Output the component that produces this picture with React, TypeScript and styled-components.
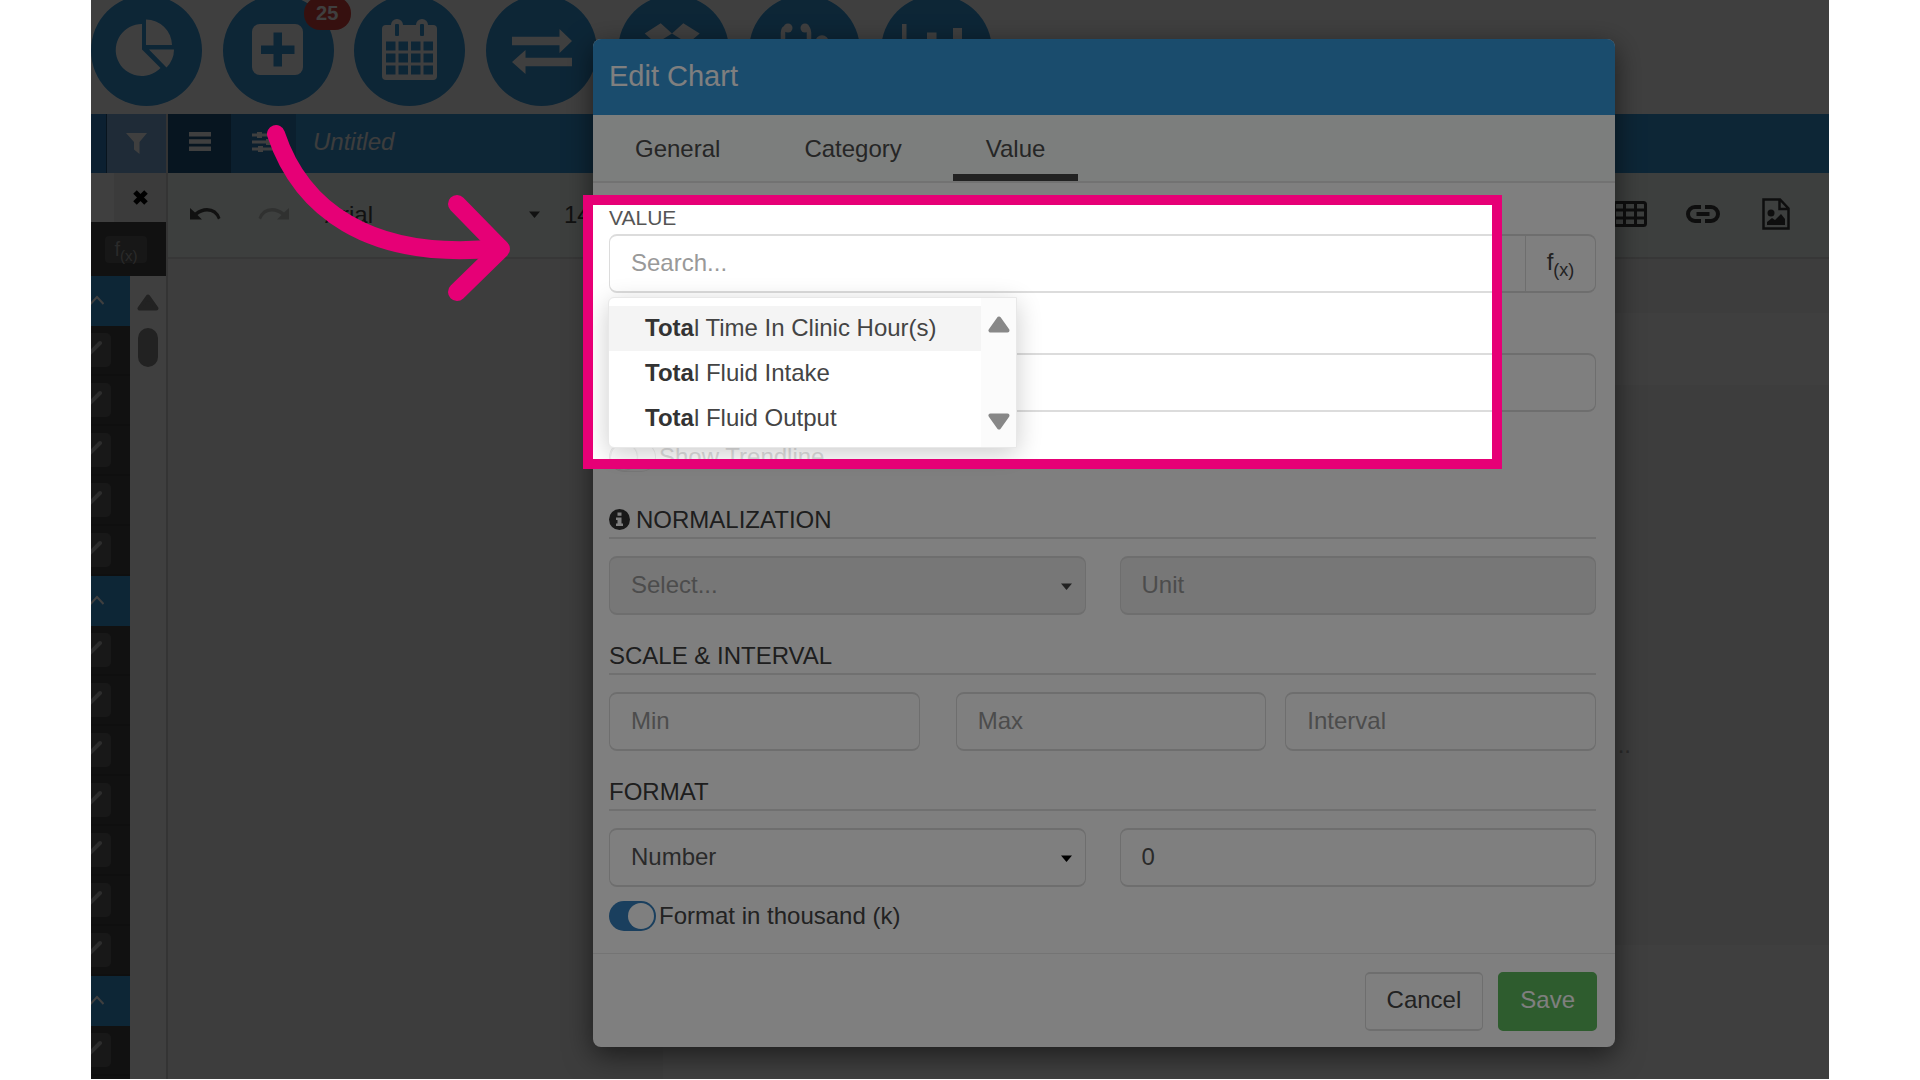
import React from "react";
import styled, { createGlobalStyle, css } from "styled-components";

const pink = "#e60076";
const blue = "#3498db";
const sans = `"Liberation Sans", Arial, sans-serif`;

const GlobalStyle = createGlobalStyle`
  *, *::before, *::after { box-sizing: border-box; }
  body { margin: 0; background: #fff; font-family: ${sans}; font-size: 24px; color: #444; overflow: hidden; }
  button, input, select { font: inherit; color: inherit; margin: 0; }
  ul { list-style: none; margin: 0; padding: 0; }
`;

const Stage = styled.div`
  position: relative;
  height: calc(100vh - 1px);
  margin: 0 91px;
  overflow: hidden;
`;

/* ---------- application behind the dialog ---------- */

const AppShell = styled.div`
  display: flex;
  flex-direction: column;
  height: 100%;
  background: #fff;
`;

const ModuleBar = styled.nav`
  display: flex;
  justify-content: space-between;
  flex: none;
  width: 901px;
  height: 114px;
`;

const ModuleButton = styled.button`
  position: relative;
  width: 111px;
  height: 111px;
  margin-top: -5px;
  padding: 0;
  border: 0;
  border-radius: 50%;
  background: ${blue};
  color: #fff;
  svg { display: block; width: 110px; height: 110px; }
`;

const Badge = styled.span`
  position: absolute;
  top: 2px;
  right: -17px;
  width: 47px;
  height: 33px;
  border-radius: 16px;
  background: #d9433e;
  font-size: 20px;
  font-weight: 700;
  line-height: 33px;
  text-align: center;
`;

const Workspace = styled.div`
  display: flex;
  flex: 1;
  min-height: 0;
`;

const Sidebar = styled.aside`
  display: flex;
  flex-direction: column;
  flex: none;
  width: 77px;
  border-right: 2px solid #d0d0d0;
`;

const SideHeader = styled.div`
  display: flex;
  height: 59px;
  flex: none;
  background: #3080c4;
`;

const FilterButton = styled.button`
  display: grid;
  place-items: center;
  width: 60px;
  margin-left: auto;
  padding: 0;
  border: 0;
  border-left: 1px solid #205078;
  background: #7cacdc;
  color: #fff;
`;

const CloseRow = styled.div`
  display: flex;
  justify-content: flex-end;
  flex: none;
  height: 49px;
`;

const CloseButton = styled.button`
  display: grid;
  place-items: center;
  width: 52px;
  padding: 0;
  border: 0;
  background: #ececec;
  color: #000;
`;

const FormulaRow = styled.div`
  display: flex;
  align-items: center;
  justify-content: flex-end;
  flex: none;
  height: 54px;
  padding-right: 19px;
  background: #444;
`;

const FormulaChip = styled.button`
  width: 42px;
  height: 27px;
  padding: 0;
  border: 0;
  border-radius: 4px;
  background: #5c5c5c;
  color: #a8a8a8;
  font-size: 20px;
  line-height: 20px;
  sub { font-size: 15px; line-height: 0; }
`;

const SideBody = styled.div`
  display: flex;
  flex: 1;
  min-height: 0;
`;

const List = styled.div`
  width: 39px;
  overflow: hidden;
  background: #444;
`;

const GroupHeader = styled.button`
  display: flex;
  align-items: center;
  justify-content: flex-end;
  width: 100%;
  height: 50px;
  padding: 0 26px 2px 0;
  border: 0;
  background: ${blue};
  color: #fff;
  svg { flex: none; }
`;

const ListRow = styled.div`
  display: flex;
  align-items: center;
  justify-content: flex-end;
  height: 50px;
  padding-right: 19px;
  border-bottom: 2px solid #3c3c3c;
`;

const CheckButton = styled.button`
  display: grid;
  place-items: center;
  flex: none;
  width: 40px;
  height: 34px;
  padding: 0;
  border: 0;
  border-radius: 5px;
  background: #606060;
  color: #b4b4b4;
`;

const ScrollTrack = styled.div`
  display: flex;
  flex-direction: column;
  align-items: center;
  gap: 17px;
  flex: 1;
  padding-top: 18px;
  color: #888;
`;

const ScrollThumb = styled.div`
  width: 20px;
  height: 39px;
  border-radius: 10px;
  background: #888;
`;

const Editor = styled.main`
  display: flex;
  flex-direction: column;
  flex: 1;
  min-width: 0;
  background: #f4f4f4;
`;

const TitleBar = styled.header`
  display: flex;
  align-items: center;
  flex: none;
  height: 59px;
  background: ${blue};
  color: #fff;
`;

const PaneButton = styled.button<{ $active?: boolean }>`
  display: grid;
  place-items: center;
  width: ${(p) => (p.$active ? 63 : 65)}px;
  height: 59px;
  padding: 0 0 4px;
  border: 0;
  background: ${(p) => (p.$active ? "#1c5480" : "#2f7cb8")};
  color: #fff;
`;

const DocName = styled.em`
  padding: 0 0 4px 17px;
  color: #f4f4f4;
`;

const Toolbar = styled.div`
  display: flex;
  align-items: center;
  flex: none;
  height: 86px;
  padding: 0 17px 2px 22px;
  border-bottom: 2px solid #dcdcdc;
  background: #f4fcf8;
  color: #444;
`;

const ToolButton = styled.button<{ $muted?: boolean }>`
  display: grid;
  place-items: center;
  width: 72px;
  height: 48px;
  padding: 0;
  border: 0;
  background: none;
  color: ${(p) => (p.$muted ? "#c0c4c2" : "#444")};
`;

const HistoryTools = styled.div`
  display: flex;
  width: 135px;
  ${ToolButton} { justify-content: start; }
`;

const InsertTools = styled.div`
  display: flex;
  gap: 1px;
  margin-left: auto;
  ${ToolButton} { color: #383838; }
`;

const ToolSelect = styled.div<{ $wide?: boolean }>`
  display: flex;
  align-items: center;
  width: ${(p) => (p.$wide ? 239 : 90)}px;
  select {
    flex: 1;
    min-width: 0;
    padding: 0;
    border: 0;
    background: none;
    appearance: none;
  }
  svg { margin-right: 24px; }
`;

const Canvas = styled.div`
  display: flex;
  flex-direction: column;
  flex: 1;
  min-height: 0;
  padding: 54px 0 0 495px;
`;

const Sheet = styled.div<{ $fill?: boolean }>`
  background: #fcfcfc;
  ${(p) => (p.$fill ? css`flex: 1;` : css`flex: none; height: 72px;`)}
`;

const SheetText = styled.p`
  flex: none;
  height: 560px;
  margin: 0;
  padding: 346px 198px 0 0;
  text-align: right;
  line-height: 28px;
  color: #aaa;
`;

/* ---------- dialog ---------- */

const Backdrop = styled.div`
  position: absolute;
  inset: 0;
  display: flex;
  align-items: flex-start;
  justify-content: flex-end;
  padding: 39px 214px 0 0;
  background: rgba(0, 0, 0, 0.5);
`;

const Dialog = styled.section`
  position: relative;
  width: 1022px;
  border-radius: 8px;
  background: #fff;
  box-shadow: 0 8px 28px rgba(0, 0, 0, 0.55);
`;

const DialogTitle = styled.h1`
  margin: 0;
  padding: 0 16px 2px;
  border-radius: 8px 8px 0 0;
  background: ${blue};
  color: #fff;
  font-size: 29px;
  font-weight: 400;
  line-height: 74px;
`;

const Tabs = styled.div`
  display: flex;
  gap: 18px;
  padding: 0 9px;
  height: 68px;
  border-bottom: 2px solid #e4e4e4;
  background: #f8fcfa;
`;

const Tab = styled.button<{ $active?: boolean }>`
  padding: 2px 33px 0;
  border: 0;
  border-top: 7px solid transparent;
  border-bottom: 7px solid ${(p) => (p.$active ? "#444" : "transparent")};
  background: none;
  color: #4c4c4c;
`;

const Body = styled.form`
  padding: 21px 19px 21px 16px;
`;

const FieldLabel = styled.label`
  display: block;
  padding-bottom: 2px;
  font-size: 21px;
  line-height: 28px;
  color: #555;
`;

const control = css`
  width: 100%;
  height: 59px;
  padding: 0 21px 2px;
  border: solid #dcdcdc;
  border-width: 2px 1px;
  border-radius: 8px;
  background: #fff;
  color: #555;
  outline: 0;
`;

const TextInput = styled.input`
  ${control}
  &::placeholder { color: #999; opacity: 1; }
  &:disabled { background: #eee; }
`;

const SearchGroup = styled.div`
  position: relative;
  display: flex;
  margin-bottom: 60px;
  ${TextInput} { border-radius: 8px 0 0 8px; }
`;

const FormulaButton = styled.button`
  flex: none;
  width: 70px;
  padding: 0 0 3px;
  border: solid #dcdcdc;
  border-width: 2px 1px 2px 0;
  border-radius: 0 8px 8px 0;
  background: #fff;
  color: #444;
  line-height: 24px;
  sub { font-size: 18px; line-height: 0; }
`;

const Menu = styled.div`
  position: absolute;
  z-index: 1;
  top: 63px;
  left: -1px;
  display: flex;
  width: 409px;
  height: 151px;
  border: 1px solid #e8e8e8;
  border-radius: 6px 0 0 6px;
  background: #fff;
  box-shadow: 0 6px 26px rgba(0, 0, 0, 0.2);
`;

const Options = styled.ul`
  flex: 1;
  padding-top: 8px;
`;

const Option = styled.li<{ $active?: boolean }>`
  padding: 0 0 2px 36px;
  background: ${(p) => (p.$active ? "#f4f4f4" : "none")};
  line-height: 43px;
  white-space: nowrap;
  b { color: #333; }
`;

const MenuScroll = styled.div`
  display: flex;
  flex-direction: column;
  align-items: center;
  justify-content: space-between;
  width: 35px;
  padding: 18px 0 17px;
  background: #fbfbfb;
  color: #888;
`;

const SwitchRow = styled.label<{ $faint?: boolean }>`
  display: flex;
  align-items: center;
  gap: 3px;
  height: 32px;
  color: ${(p) => (p.$faint ? "#ddd" : "#444")};
`;

const TrendRow = styled.div`
  padding: 29px 0 31px;
`;

const ThousandRow = styled.div`
  padding-top: 13px;
`;

const Switch = styled.input`
  appearance: none;
  width: 47px;
  height: 30px;
  margin: 0;
  padding: 2px;
  border-radius: 15px;
  background: #fff;
  box-shadow: inset 0 0 0 1px #eee;
  &::before {
    content: "";
    display: block;
    width: 26px;
    height: 26px;
    border-radius: 50%;
    background: #fff;
    box-shadow: 0 0 2px #ccc;
  }
  &:checked { background: #347ebc; box-shadow: none; }
  &:checked::before { margin-left: auto; box-shadow: none; }
`;

const Fieldset = styled.section`
  & + & { padding-top: 25px; }
`;

const Legend = styled.h2`
  display: flex;
  align-items: center;
  gap: 6px;
  margin: 0 0 17px;
  padding-bottom: 2px;
  border-bottom: 2px solid #e0e0e0;
  color: #3c3c3c;
  font-size: 24px;
  font-weight: 400;
  line-height: 31px;
`;

const TwoColumns = styled.div`
  display: grid;
  grid-template-columns: 1fr 1fr;
  gap: 34px;
`;

const RangeColumns = styled.div`
  display: grid;
  grid-template-columns: 1fr 36px 1fr 19px 1fr;
  & > :nth-child(2) { grid-column: 3; }
  & > :nth-child(3) { grid-column: 5; }
`;

const SelectBox = styled.div`
  position: relative;
  select {
    ${control}
    appearance: none;
    opacity: 1;
  }
  select:disabled { background: #eee; color: #999; }
  svg {
    position: absolute;
    right: 14px;
    top: 27px;
    color: #000;
    pointer-events: none;
  }
  select:disabled + svg { color: #444; }
`;

const Footer = styled.footer`
  display: flex;
  justify-content: flex-end;
  gap: 15px;
  padding: 18px 18px 16px;
  border-top: 1px solid #e8e8e8;
`;

const FooterButton = styled.button<{ $primary?: boolean }>`
  height: 59px;
  padding: 0 21px 4px;
  border: solid ${(p) => (p.$primary ? "#5cb85c" : "#dcdcdc")};
  border-width: 2px 1px;
  border-radius: 5px;
  background: ${(p) => (p.$primary ? "#5cb85c" : "#fff")};
  color: ${(p) => (p.$primary ? "#fff" : "#444")};
`;

/* ---------- walkthrough spotlight ---------- */

const Spotlight = styled.div`
  position: absolute;
  z-index: 2;
  top: 156px;
  left: -10px;
  right: 113px;
  height: 274px;
  border: 10px solid ${pink};
  box-shadow: 0 0 0 3000px rgba(0, 0, 0, 0.5);
  pointer-events: none;
`;

const Pointer = styled.svg`
  position: absolute;
  z-index: 3;
  top: 124px;
  left: 176px;
  pointer-events: none;
`;

/* ---------- icons ---------- */

const Caret = () => (
  <svg width="11" height="7" viewBox="0 0 11 7" fill="currentColor"><path d="M0 .5h11L5.5 7z" /></svg>
);

const Triangle = ({ down }: { down?: boolean }) => (
  <svg width="22" height="17" viewBox="0 0 22 17" fill="currentColor" stroke="currentColor" strokeWidth="4" strokeLinejoin="round">
    <path d={down ? "M2.5 2.5h17L11 14.5z" : "M2.5 14.5h17L11 2.5z"} />
  </svg>
);

const ModuleIcon = ({ children }: { children: React.ReactNode }) => (
  <svg viewBox="0 0 110 110" fill="currentColor">{children}</svg>
);

const PieIcon = () => (
  <ModuleIcon>
    <path d="M51 28A26 26 0 1 0 69.5 72L51 53.5z" />
    <path d="M55 23.5A26 26 0 0 1 81 49H55z" />
    <path d="M58 53.5h25A26 26 0 0 1 75.5 71.5z" />
  </ModuleIcon>
);

const PlusIcon = () => (
  <ModuleIcon>
    <rect x="29" y="28" width="51" height="51" rx="8" />
    <path fill={blue} d="M50.5 36.5h8.5v13h12.5v8.5h-12.5v12.5h-8.500v-12.5h-12.5v-8.5h12.5z" />
  </ModuleIcon>
);

const CalendarIcon = () => (
  <ModuleIcon>
    <rect x="28" y="29" width="55" height="55" rx="4" />
    <rect x="37" y="23" width="12" height="18" rx="6" />
    <rect x="62" y="23" width="12" height="18" rx="6" />
    <g fill={blue}>
      <rect x="41" y="28" width="4" height="12" rx="1" />
      <rect x="66" y="28" width="4" height="12" rx="1" />
      {[45.5, 57.5, 69.5].map((y) =>
        [32, 44.5, 57, 69.5].map((x) => <rect key={`${x}-${y}`} x={x} y={y} width="9.5" height="9" />)
      )}
    </g>
  </ModuleIcon>
);

const ExchangeIcon = () => (
  <ModuleIcon>
    <path d="M26 40.7h47.5V33L86 45 73.5 57v-7.7H26z" />
    <path d="M86 61.7H39.5V54L26 66l13.5 12v-7.7H86z" />
  </ModuleIcon>
);

const BoxIcon = () => (
  <ModuleIcon>
    <path d="M42.7 27.3L54 37.5 38 47.5 26.7 37.5zM65.3 27.3L54 37.5l16 10 11.7-10z" />
    <path d="M38 48l16 10-11.3 8L27 57zM70 48L54 58l11.3 8L81 57zM54 61l11 8 5-3v4L54 80 38 70v-4l5 3z" />
  </ModuleIcon>
);

const StethoscopeIcon = () => (
  <ModuleIcon>
    <g fill="none" stroke="currentColor" strokeWidth="4.5">
      <path d="M39 31.5q-5 0-5 5V50q0 13 13 13t13-13V36.5q0-5-5-5M47 63v6q0 12 13 12t13-12V52" />
      <circle cx="73" cy="46" r="4.5" />
    </g>
    <circle cx="39" cy="32" r="4.5" />
    <circle cx="56" cy="32" r="4.5" />
  </ModuleIcon>
);

const BarsIcon = () => (
  <ModuleIcon>
    <path d="M21 28h4.5v50H92v4.5H21zM33 52h9v22h-9zM46 36.5h9.5V74H46zM59 46h9v28h-9zM72 32h9v42h-9z" />
  </ModuleIcon>
);

const CheckIcon = () => (
  <svg width="24" height="20" viewBox="0 0 24 20" fill="none" stroke="currentColor" strokeWidth="4" strokeLinecap="round">
    <path d="M2 10l6 6L21 3" />
  </svg>
);

const ChevronIcon = () => (
  <svg width="14" height="11" viewBox="0 0 14 11" fill="none" stroke="currentColor" strokeWidth="2"><path d="M.5 9L7 2l6.5 7" /></svg>
);

const UndoIcon = ({ flip }: { flip?: boolean }) => (
  <svg width="31" height="14" viewBox="0 0 31 14" fill="currentColor">
    <path
      transform={flip ? "matrix(-1 0 0 1 31 0)" : undefined}
      d="M0 1v11.5h12L7.5 8Q12 4.5 17 4.5q8 0 11 8l2.5-1.500Q27 1 17 1 10.5 1 5 5.5z"
    />
  </svg>
);

const modules = [
  { name: "Reports", icon: <PieIcon /> },
  { name: "Add", icon: <PlusIcon />, badge: "25" },
  { name: "Calendar", icon: <CalendarIcon /> },
  { name: "Transfer", icon: <ExchangeIcon /> },
  { name: "Storage", icon: <BoxIcon /> },
  { name: "Clinic", icon: <StethoscopeIcon /> },
  { name: "Charts", icon: <BarsIcon /> },
];

const options = ["l Time In Clinic Hour(s)", "l Fluid Intake", "l Fluid Output"];
const groups = [5, 7, 2];

export default function App() {
  return (
    <Stage>
      <GlobalStyle />
      <AppShell>
        <ModuleBar>
          {modules.map((m) => (
            <ModuleButton key={m.name} aria-label={m.name}>
              {m.icon}
              {m.badge && <Badge>{m.badge}</Badge>}
            </ModuleButton>
          ))}
        </ModuleBar>
        <Workspace>
          <Sidebar>
            <SideHeader>
              <FilterButton aria-label="Filter">
                <svg width="21" height="21" viewBox="0 0 21 21" fill="currentColor"><path d="M0 0h21l-7.5 9v12L8 16.5V9z" /></svg>
              </FilterButton>
            </SideHeader>
            <CloseRow>
              <CloseButton aria-label="Close">
                <svg width="15" height="15" viewBox="0 0 15 15" stroke="currentColor" strokeWidth="5"><path d="M2 2l11 11M13 2L2 13" /></svg>
              </CloseButton>
            </CloseRow>
            <FormulaRow>
              <FormulaChip>f<sub>(x)</sub></FormulaChip>
            </FormulaRow>
            <SideBody>
              <List>
                {groups.map((count, g) => (
                  <React.Fragment key={g}>
                    <GroupHeader aria-label="Collapse group"><ChevronIcon /></GroupHeader>
                    {Array.from({ length: count }, (_, i) => (
                      <ListRow key={i}>
                        <CheckButton aria-label="Select item"><CheckIcon /></CheckButton>
                      </ListRow>
                    ))}
                  </React.Fragment>
                ))}
              </List>
              <ScrollTrack>
                <Triangle />
                <ScrollThumb />
              </ScrollTrack>
            </SideBody>
          </Sidebar>
          <Editor>
            <TitleBar>
              <PaneButton $active aria-label="Menu">
                <svg width="22" height="19" viewBox="0 0 22 19" fill="currentColor"><path d="M0 0h22v4.5H0zM0 7.2h22v4.5H0zM0 14.5h22V19H0z" /></svg>
              </PaneButton>
              <PaneButton aria-label="Settings">
                <svg width="24" height="22" viewBox="0 0 24 22" fill="currentColor">
                  <path d="M0 2.5h24v3H0zM0 9.5h24v3H0zM0 16.5h24v3H0z" />
                  <path d="M5 1h5v6H5zM14 8h5v6h-5zM6 15h5v6H6z" />
                </svg>
              </PaneButton>
              <DocName>Untitled</DocName>
            </TitleBar>
            <Toolbar>
              <HistoryTools>
                <ToolButton aria-label="Undo"><UndoIcon /></ToolButton>
                <ToolButton $muted aria-label="Redo"><UndoIcon flip /></ToolButton>
              </HistoryTools>
              <ToolSelect $wide>
                <select aria-label="Font family" defaultValue="Arial"><option>Arial</option></select>
                <Caret />
              </ToolSelect>
              <ToolSelect>
                <select aria-label="Font size" defaultValue="14"><option>14</option></select>
              </ToolSelect>
              <InsertTools>
                <ToolButton aria-label="Insert table">
                  <svg width="34" height="26" viewBox="0 0 34 26" fill="none" stroke="currentColor" strokeWidth="3">
                    <rect x="1.5" y="1.5" width="31" height="23" rx="2" />
                    <path d="M11.5 1v24M22.5 1v24M1 9h32M1 17h32" />
                  </svg>
                </ToolButton>
                <ToolButton aria-label="Insert link">
                  <svg width="34" height="18" viewBox="0 0 34 18" fill="none" stroke="currentColor" strokeWidth="4">
                    <path d="M15 2H9a7 7 0 0 0 0 14h6M19 2h6a7 7 0 0 1 0 14h-6M10.5 9h13" />
                  </svg>
                </ToolButton>
                <ToolButton aria-label="Insert image">
                  <svg width="28" height="32" viewBox="0 0 28 32" fill="none" stroke="currentColor" strokeWidth="2.5">
                    <path d="M1.5 1.5h16.5l8.5 9V30.5h-25zM17.5 1.5V11h9" />
                    <path fill="currentColor" stroke="none" d="M5 27v-3l5-4 3 2 6-6 4 5v6z" />
                    <circle cx="9" cy="15" r="3.5" fill="currentColor" stroke="none" />
                  </svg>
                </ToolButton>
              </InsertTools>
            </Toolbar>
            <Canvas>
              <Sheet />
              <SheetText>..</SheetText>
              <Sheet $fill />
            </Canvas>
          </Editor>
        </Workspace>
      </AppShell>

      <Backdrop>
        <Dialog role="dialog" aria-labelledby="dialog-title">
          <DialogTitle id="dialog-title">Edit Chart</DialogTitle>
          <Tabs role="tablist">
            <Tab role="tab">General</Tab>
            <Tab role="tab">Category</Tab>
            <Tab role="tab" $active aria-selected>Value</Tab>
          </Tabs>
          <Body onSubmit={(e) => e.preventDefault()}>
            <FieldLabel htmlFor="value-search">VALUE</FieldLabel>
            <SearchGroup>
              <TextInput id="value-search" placeholder="Search..." autoComplete="off" />
              <FormulaButton type="button">f<sub>(x)</sub></FormulaButton>
              <Menu>
                <Options role="listbox" aria-label="Values">
                  {options.map((rest, i) => (
                    <Option key={rest} role="option" $active={i === 0} aria-selected={i === 0}>
                      <b>Tota</b>{rest}
                    </Option>
                  ))}
                </Options>
                <MenuScroll>
                  <Triangle />
                  <Triangle down />
                </MenuScroll>
              </Menu>
            </SearchGroup>
            <TextInput aria-label="Value label" />
            <TrendRow>
              <SwitchRow $faint>
                <Switch type="checkbox" />
                Show Trendline
              </SwitchRow>
            </TrendRow>

            <Fieldset>
              <Legend>
                <svg width="21" height="21" viewBox="0 0 21 21">
                  <circle cx="10.5" cy="10.5" r="10.5" fill="#333" />
                  <path fill="#fff" d="M8.5 3.5h4v3.2h-4zM7 8.5h5.5v6H14V17H7v-2.5h1.5V11H7z" />
                </svg>
                NORMALIZATION
              </Legend>
              <TwoColumns>
                <SelectBox>
                  <select aria-label="Normalization" disabled><option>Select...</option></select>
                  <Caret />
                </SelectBox>
                <TextInput aria-label="Unit" placeholder="Unit" disabled />
              </TwoColumns>
            </Fieldset>

            <Fieldset>
              <Legend>SCALE &amp; INTERVAL</Legend>
              <RangeColumns>
                <TextInput aria-label="Min" placeholder="Min" />
                <TextInput aria-label="Max" placeholder="Max" />
                <TextInput aria-label="Interval" placeholder="Interval" />
              </RangeColumns>
            </Fieldset>

            <Fieldset>
              <Legend>FORMAT</Legend>
              <TwoColumns>
                <SelectBox>
                  <select aria-label="Format" defaultValue="Number"><option>Number</option></select>
                  <Caret />
                </SelectBox>
                <TextInput aria-label="Decimals" defaultValue="0" />
              </TwoColumns>
            </Fieldset>
            <ThousandRow>
              <SwitchRow>
                <Switch type="checkbox" defaultChecked />
                Format in thousand (k)
              </SwitchRow>
            </ThousandRow>
          </Body>
          <Footer>
            <FooterButton type="button">Cancel</FooterButton>
            <FooterButton type="button" $primary>Save</FooterButton>
          </Footer>
          <Spotlight />
        </Dialog>
      </Backdrop>

      <Pointer width="244" height="178" viewBox="267 124 244 178" fill="none" stroke={pink} strokeWidth="18" strokeLinecap="round" strokeLinejoin="round" aria-hidden>
        <path d="M276 134C300 206 366 262 500 248" />
        <path d="M457 204l44 45-44 43" />
      </Pointer>
    </Stage>
  );
}
